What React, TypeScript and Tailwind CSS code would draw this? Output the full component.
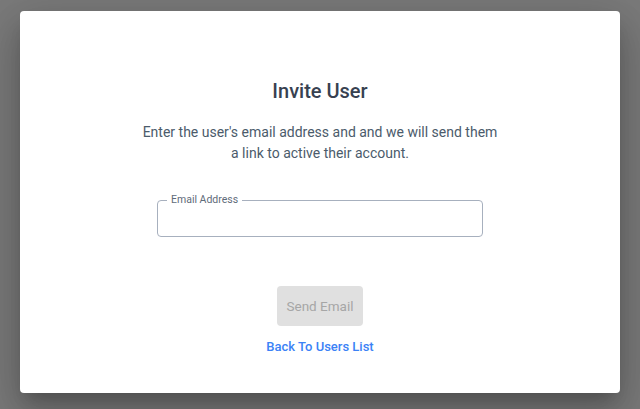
import React, { useState } from 'react';

export default function App() {
  const [email, setEmail] = useState('');

  return (
    <div
      className="w-[640px] h-[409px] bg-[#7a7a7a] flex justify-center pt-[11px]"
      style={{ fontFamily: 'Roboto, "Noto Sans", sans-serif' }}
    >
      <div className="w-[600px] h-[382px] bg-white rounded shadow-[0_11px_15px_-7px_rgba(0,0,0,0.2),0_24px_38px_3px_rgba(0,0,0,0.14),0_9px_46px_8px_rgba(0,0,0,0.12)] flex flex-col items-center pt-[66px]">
        <h1 className="text-[20px] leading-[28px] font-medium text-[#374151]">Invite User</h1>
        <p className="mt-[17px] w-[360px] text-center text-[14px] leading-[21px] text-[#4b5b6b]">
          Enter the user's email address and and we will send them a link to active their account.
        </p>
        <div className="relative mt-[36px] w-[326px]">
          <span className="absolute -top-[6px] left-[10px] bg-white px-[4px] text-[10.5px] leading-[12px] text-[#5f6b7a]">
            Email Address
          </span>
          <input
            type="email"
            value={email}
            onChange={(e) => setEmail(e.target.value)}
            className="w-full h-[37px] border border-[#a7b0be] rounded px-3 text-[14px] outline-none"
          />
        </div>
        <button
          disabled
          className="mt-[49px] w-[86px] h-[40px] rounded bg-[#e0e0e0] text-[#a6a6a6] text-[13.5px]"
        >
          Send Email
        </button>
        <a href="#" className="mt-[13px] text-[13px] leading-[16px] font-medium text-[#3b82f6]">
          Back To Users List
        </a>
      </div>
    </div>
  );
}
